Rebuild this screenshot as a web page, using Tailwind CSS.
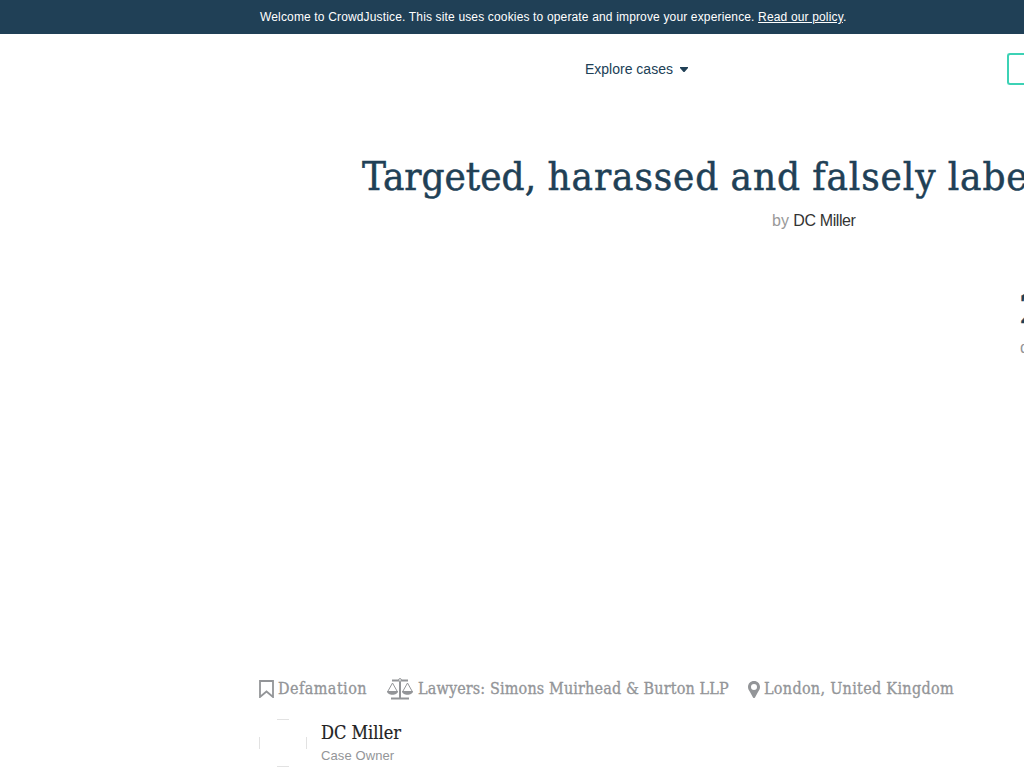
<!DOCTYPE html>
<html lang="en">
<head>
    <meta charset="UTF-8">
    <meta name="viewport" content="width=device-width, initial-scale=1.0">
    <title>CrowdJustice</title>
    <script src="https://cdn.jsdelivr.net/npm/@tailwindcss/browser@4"></script>
</head>
<body class="bg-white overflow-hidden font-['Liberation_Sans',sans-serif]">
    <div class="w-[1024px] h-[768px] flex flex-col overflow-hidden whitespace-nowrap">
        <!-- Cookie banner -->
        <div class="h-[34px] shrink-0 bg-[#204056] pl-[260px] pt-2 text-xs leading-[18px] text-white">
            <span class="inline-block tracking-[0.155px]">Welcome to CrowdJustice. This site uses cookies to operate and improve your experience. <a href="#" class="underline">Read our policy</a>.</span>
        </div>

        <!-- Navigation -->
        <header class="h-[70px] shrink-0 flex items-center justify-between pl-[585px]">
            <a href="#" class="flex items-center gap-[7px] text-sm text-[#204056]">
                <span>Explore cases</span>
                <svg class="w-2 h-[5px]" viewBox="0 0 8 5" fill="currentColor"><path d="M0 0h8v1L4.500 5h-1L0 1z"/></svg>
            </a>
            <a href="#" class="w-[17px] h-8 border-2 border-r-0 border-[#3cd2b5] rounded-l-[3px]"></a>
        </header>

        <!-- Case title -->
        <section class="h-[184px] shrink-0 pt-[46px] pl-[362px]">
            <h1 class="font-['Roboto_Slab','DejaVu_Serif_Condensed','DejaVu_Serif',serif] text-[40px] leading-[52px] text-[#204056] [-webkit-text-stroke:0.5px]">Targeted, <span class="tracking-[0.9px] [word-spacing:-1px]">harassed and falsely labe</span></h1>
            <p class="pl-[410px] pt-1.5 text-base leading-[26px] text-[#999999]">by <span class="tracking-[-0.4px] text-[#333333]">DC Miller</span></p>
        </section>

        <!-- Pledge stats -->
        <section class="flex-1 flex flex-col pl-[1019px]">
            <div class="font-['Roboto_Slab','DejaVu_Serif_Condensed','DejaVu_Serif',serif] text-[40px] leading-[42px] text-[#204056] [-webkit-text-stroke:0.5px]">2</div>
            <div class="pt-1.5 pl-px text-base leading-6 text-[#939598]">d</div>
        </section>

        <!-- Case details -->
        <section class="h-[98px] shrink-0 pl-[259px]">
            <div class="h-[38px] flex items-center font-['Roboto_Slab','DejaVu_Serif_Condensed','DejaVu_Serif',serif] text-base text-[#939598] [-webkit-text-stroke:0.3px]">
                <svg class="w-[15px] h-[18px] mr-1" viewBox="0 0 15 18" fill="none" stroke="currentColor" stroke-width="1.8"><path d="M1 1h13v16l-6.500-5.500L1 17z"/></svg>
                <span class="w-[109px] tracking-[0.45px]">Defamation</span>
                <svg class="w-[26px] h-[22px] mr-[5px]" viewBox="0 0 26 22" fill="none" stroke="currentColor"><path d="M5 2.500h16M4 20.500h18" stroke-width="1.800"/><path d="M13 4v16" stroke-width="2"/><circle cx="13" cy="2" r="1.400" fill="white"/><path d="M1 13L5.500 5L10 13M16 13L20.500 5L25 13"/><path d="M0 13h11c0 5-11 5-11 0zM15 13h11c0 5-11 5-11 0z" fill="currentColor" stroke="none"/></svg>
                <span class="w-[330px] tracking-[0.14px]">Lawyers: Simons Muirhead &amp; Burton LLP</span>
                <svg class="w-3 h-[17px] mr-1" viewBox="0 0 12 17" fill="currentColor"><path fill-rule="evenodd" d="M6 0C2.500 0 0 2.600 0 6c0 2 1 3.500 2 5l3 5.400q1 1.200 2 0L10 11c1-1.500 2-3 2-5 0-3.400-2.500-6-6-6zm0 3a3 3 0 1 1 0 6 3 3 0 0 1 0-6z"/></svg>
                <span class="tracking-[0.3px]">London, United Kingdom</span>
            </div>
            <div class="flex pt-[11px] gap-3.5">
                <svg class="w-12 h-12" viewBox="0 0 48 48" fill="none" stroke="#e2e2e2"><path d="M18 .5h12M18 47.500h12M.5 18v12M47.500 18v12"/></svg>
                <div class="pt-px">
                    <div class="font-['Roboto_Slab','DejaVu_Serif_Condensed','DejaVu_Serif',serif] text-lg leading-[26px] text-[#222222] [-webkit-text-stroke:0.2px]">DC Miller</div>
                    <div class="text-[13px] leading-5 tracking-[0.1px] text-[#939598]">Case Owner</div>
                </div>
            </div>
        </section>
    </div>
</body>
</html>
